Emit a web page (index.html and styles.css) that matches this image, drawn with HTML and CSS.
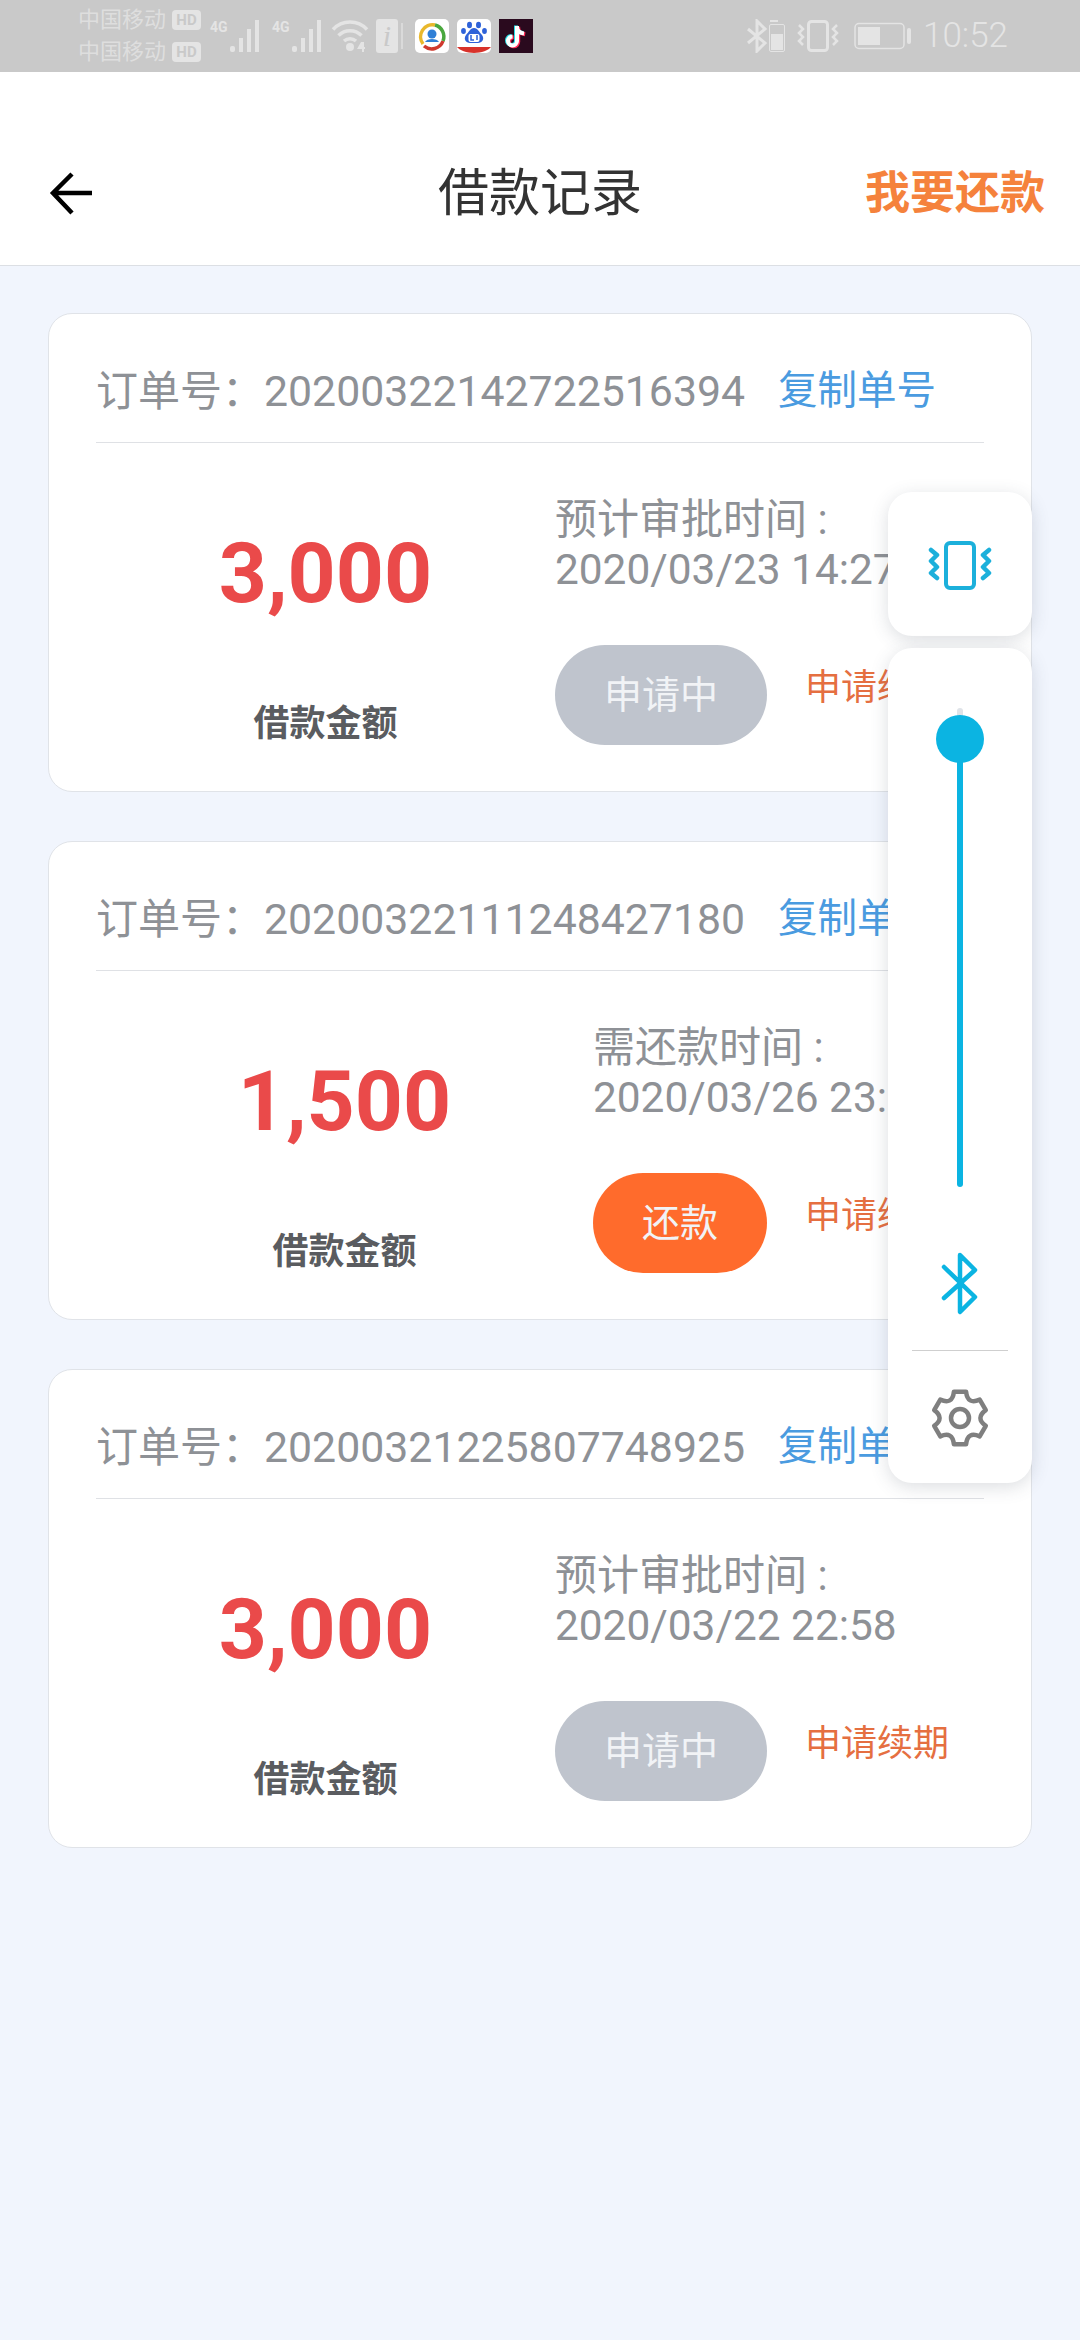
FILE: index.html
```html
<!DOCTYPE html>
<html lang="zh-CN">
<head>
    <title>借款记录</title>
    <link rel="stylesheet" href="styles.css">
</head>
<body>
    <div class="page">
        <div class="status-bar">
            <div class="carriers">
                <div class="carrier"><span>中国移动</span><span class="hd">HD</span></div>
                <div class="carrier"><span>中国移动</span><span class="hd">HD</span></div>
            </div>
            <div class="signal">
                <span class="net">4G</span>
                <svg class="bars" width="34" height="34" viewBox="0 0 34 34"><g fill="#e4e4e4"><rect x="0" y="27" width="5" height="6" rx="2"/><rect x="9" y="19" width="4" height="14"/><rect x="17" y="10" width="4" height="23"/><rect x="25" y="1" width="4" height="32"/></g></svg>
            </div>
            <div class="signal">
                <span class="net">4G</span>
                <svg class="bars" width="34" height="34" viewBox="0 0 34 34"><g fill="#e4e4e4"><rect x="0" y="27" width="5" height="6" rx="2"/><rect x="9" y="19" width="4" height="14"/><rect x="17" y="10" width="4" height="23"/><rect x="25" y="1" width="4" height="32"/></g></svg>
            </div>
            <svg class="wifi" width="40" height="32" viewBox="0 0 40 32"><g fill="none" stroke="#e4e4e4" stroke-width="3.5"><path d="M2 9.5C11-.5 27-.5 36 9.5"/><path d="M7.500 15.500C14 9 24 9 30.500 15.500"/><path d="M13 21C16.500 18 21.500 18 25 21"/></g><circle cx="19" cy="27" r="4" fill="#e4e4e4"/><path d="M30 22l-4 7h5v3h2v-3h1v-2h-1v-5z" fill="#e4e4e4"/></svg>
            <div class="info-icon">
                <span class="info-box">i</span>
                <span class="info-edge"></span>
            </div>
            <div class="app-icons">
                <svg class="app" width="34" height="34" viewBox="0 0 34 34">
                    <rect width="34" height="34" rx="5" fill="#fff"/>
                    <g fill="none" stroke-width="3.500">
                        <path d="M8 25A12 12 0 0 1 20 6" stroke="#e9b82c"/>
                        <path d="M20 6A12 12 0 0 1 28 22" stroke="#4aa83e"/>
                        <path d="M28 22A12 12 0 0 1 9 27" stroke="#cf3a2e"/>
                    </g>
                    <circle cx="17" cy="15" r="4.500" fill="#2f7fd6"/>
                    <path d="M10 23c2-4 12-4 14 0z" fill="#2f7fd6"/>
                </svg>
                <svg class="app" width="34" height="34" viewBox="0 0 34 34">
                    <rect width="34" height="34" rx="5" fill="#fff"/>
                    <g fill="#2e62d9">
                        <ellipse cx="12.500" cy="6" rx="2.500" ry="3.200"/>
                        <ellipse cx="21.500" cy="6" rx="2.500" ry="3.200"/>
                        <ellipse cx="6.500" cy="12" rx="2.400" ry="3"/>
                        <ellipse cx="27.500" cy="12" rx="2.400" ry="3"/>
                        <path d="M17 9c4 0 5 4 8 7 3 4 0 8-4 8H13c-4 0-7-4-4-8 3-3 4-7 8-7z"/>
                    </g>
                    <rect x="11.500" y="15" width="11" height="8" rx="2" fill="#fff"/>
                    <path d="M14 16v5h3M20 16v5" fill="none" stroke="#2e62d9" stroke-width="1.500"/>
                    <path d="M0 28h34c-2 3-10 6-17 6S2 31 0 28z" fill="#d8322a"/>
                </svg>
                <svg class="app" width="34" height="34" viewBox="0 0 34 34">
                    <rect width="34" height="34" fill="#2a0a1e"/>
                    <g fill="none" stroke-width="4">
                        <path d="M18 7v15a4.500 4.500 0 1 1-4.500-4.500M18 8c0 4 3 6 7 6.500" stroke="#ff2a55" transform="translate(1.200 .8)"/>
                        <path d="M18 7v15a4.500 4.500 0 1 1-4.500-4.500M18 8c0 4 3 6 7 6.500" stroke="#25e0e8" transform="translate(-1 -.6)"/>
                        <path d="M18 7v15a4.500 4.500 0 1 1-4.500-4.500M18 8c0 4 3 6 7 6.500" stroke="#fff"/>
                    </g>
                </svg>
            </div>
            <div class="status-right">
                <svg width="40" height="34" viewBox="0 0 40 34">
                    <path d="M2 10l17 14-8 8V2l8 8-17 14" fill="none" stroke="#e4e4e4" stroke-width="3"/>
                    <rect x="24" y="1" width="8" height="2" fill="#e4e4e4"/>
                    <rect x="23.500" y="5.500" width="15" height="27" rx="1.500" fill="none" stroke="#e4e4e4"/>
                    <rect x="25" y="15" width="12" height="16" fill="#e4e4e4"/>
                </svg>
                <svg class="vib-small" width="42" height="34" viewBox="0 0 42 34">
                    <rect x="11.500" y="2.500" width="19" height="29" rx="3" fill="none" stroke="#e4e4e4" stroke-width="3"/>
                    <path d="M2 6l4 4-4 4 4 4-4 4 4 4M40 6l-4 4 4 4-4 4 4 4-4 4" fill="none" stroke="#e4e4e4" stroke-width="2.500"/>
                </svg>
                <svg class="battery" width="58" height="28" viewBox="0 0 58 28">
                    <rect x="1" y="1.500" width="49" height="25" rx="4" fill="none" stroke="#e4e4e4" stroke-width="1.500"/>
                    <rect x="4" y="5" width="22" height="18" fill="#e4e4e4"/>
                    <rect x="53" y="6" width="4" height="16" rx="2" fill="#e4e4e4"/>
                </svg>
                <span class="time">10:52</span>
            </div>
        </div>

        <header class="top-bar">
            <div class="back">
                <svg width="48" height="46" viewBox="0 0 48 46"><path d="M44 22H6M24 3L5 22l19 20" fill="none" stroke="#000" stroke-width="4.500"/></svg>
            </div>
            <h1 class="title">借款记录</h1>
            <div class="repay-link">我要还款</div>
        </header>

        <div class="record-list">
            <div class="record-card">
                <div class="order-row">
                    <span class="order-no">订单号：<span class="num">20200322142722516394</span></span>
                    <span class="copy-link">复制单号</span>
                </div>
                <div class="record-body">
                    <div class="amount-col">
                        <div class="amount">3,000</div>
                        <div class="amount-label">借款金额</div>
                    </div>
                    <div class="detail-col">
                        <div class="detail-text">预计审批时间 :</div>
                        <div class="detail-text date">2020/03/23 14:27</div>
                        <div class="action-row">
                            <div class="pill pill-pending">申请中</div>
                            <div class="renew-link">申请续期</div>
                        </div>
                    </div>
                </div>
            </div>

            <div class="record-card">
                <div class="order-row">
                    <span class="order-no">订单号：<span class="num">20200322111248427180</span></span>
                    <span class="copy-link">复制单号</span>
                </div>
                <div class="record-body">
                    <div class="amount-col">
                        <div class="amount">1,500</div>
                        <div class="amount-label">借款金额</div>
                    </div>
                    <div class="detail-col">
                        <div class="detail-text">需还款时间 :</div>
                        <div class="detail-text date">2020/03/26 23:59</div>
                        <div class="action-row">
                            <div class="pill pill-repay">还款</div>
                            <div class="renew-link">申请续期</div>
                        </div>
                    </div>
                </div>
            </div>

            <div class="record-card">
                <div class="order-row">
                    <span class="order-no">订单号：<span class="num">20200321225807748925</span></span>
                    <span class="copy-link">复制单号</span>
                </div>
                <div class="record-body">
                    <div class="amount-col">
                        <div class="amount">3,000</div>
                        <div class="amount-label">借款金额</div>
                    </div>
                    <div class="detail-col">
                        <div class="detail-text">预计审批时间 :</div>
                        <div class="detail-text date">2020/03/22 22:58</div>
                        <div class="action-row">
                            <div class="pill pill-pending">申请中</div>
                            <div class="renew-link">申请续期</div>
                        </div>
                    </div>
                </div>
            </div>
        </div>

        <div class="overlay">
            <div class="overlay-panel vibrate-panel">
                <svg width="64" height="52" viewBox="0 0 64 52">
                    <rect x="18" y="2" width="28" height="45" rx="4" fill="none" stroke="#1cb0db" stroke-width="4"/>
                    <path d="M3 9l6 5-6 6 6 6-6 6 6 5M61 9l-6 5 6 6-6 6 6 6-6 5" fill="none" stroke="#1cb0db" stroke-width="4.500" stroke-linecap="round" stroke-linejoin="round"/>
                </svg>
            </div>
            <div class="overlay-panel control-panel">
                <div class="slider">
                    <div class="slider-stub"></div>
                    <div class="slider-track"></div>
                    <div class="slider-knob"></div>
                </div>
                <svg class="bluetooth" width="40" height="66" viewBox="0 0 40 66">
                    <path d="M4 17l31 30-15 15V5l15 15L4 48" fill="none" stroke="#0bb4e2" stroke-width="4.500" stroke-linecap="round" stroke-linejoin="round"/>
                </svg>
                <div class="panel-line"></div>
                <svg class="gear" width="60" height="60" viewBox="0 0 60 60">
                    <path d="M23.900 3.700L36.100 3.700Q37.500 17 49.700 11.600L55.800 22.100Q45 30 55.800 37.900L49.700 48.400Q37.500 43 36.100 56.300L23.900 56.300Q22.500 43 10.300 48.400L4.200 37.900Q15 30 4.200 22.100L10.300 11.600Q22.500 17 23.900 3.700Z" fill="none" stroke="#7f7f7f" stroke-width="4.500" stroke-linejoin="round"/>
                    <circle cx="30" cy="30" r="9" fill="none" stroke="#7f7f7f" stroke-width="4.500"/>
                </svg>
            </div>
        </div>
    </div>
</body>
</html>
```

FILE: styles.css
```css
* {
    box-sizing: border-box;
}

body {
    margin: 0;
    font-family: Roboto, "Noto Sans CJK SC", sans-serif;
    background: #f1f5fd;
}

.page {
    position: relative;
    width: 1080px;
    height: 2340px;
    overflow: hidden;
}

/* status bar */
.status-bar {
    display: flex;
    align-items: center;
    height: 72px;
    padding-left: 78px;
    padding-right: 72px;
    background: #c9c9c9;
    color: #e4e4e4;
}

.carriers {
    display: flex;
    flex-direction: column;
    gap: 10px;
    width: 132px;
}

.carrier {
    display: flex;
    align-items: center;
    gap: 6px;
    height: 22px;
    color: #dedede;
    font-size: 22px;
    line-height: 22px;
}

.hd {
    width: 29px;
    height: 20px;
    border-radius: 4px;
    background: #e4e4e4;
    color: #c9c9c9;
    font-size: 15px;
    font-weight: 700;
    line-height: 20px;
    text-align: center;
}

.signal {
    position: relative;
    display: flex;
    width: 62px;
    height: 34px;
    justify-content: flex-end;
}

.bars {
    margin-right: 8px;
}

.net {
    position: absolute;
    left: 0;
    top: 0;
    font-size: 14px;
    font-weight: 700;
    line-height: 16px;
}

.wifi {
    margin-left: -3px;
}

.info-icon {
    display: flex;
    align-items: center;
    gap: 3px;
    margin-left: 5px;
}

.info-box {
    width: 22px;
    height: 34px;
    border-radius: 3px;
    background: #e4e4e4;
    color: #c9c9c9;
    font-family: "Liberation Serif", serif;
    font-size: 30px;
    font-style: italic;
    line-height: 34px;
    text-align: center;
}

.info-edge {
    width: 2px;
    height: 26px;
    background: #dadada;
}

.app-icons {
    display: flex;
    gap: 8px;
    margin-left: 12px;
}

.status-right {
    display: flex;
    align-items: center;
    margin-left: auto;
}

.vib-small {
    margin-left: 11px;
}

.battery {
    margin-left: 15px;
}

.time {
    margin-left: 11px;
    font-size: 35px;
    font-weight: 300;
    line-height: 40px;
}

/* header */
.top-bar {
    display: grid;
    grid-template-columns: 1fr auto 1fr;
    align-items: center;
    height: 194px;
    padding: 50px 33px 0;
    background: #fff;
    border-bottom: 1px solid #dcdfe4;
}

.back {
    display: flex;
    height: 46px;
    margin-left: 15px;
}

.title {
    margin: 0;
    color: #333;
    font-size: 51px;
    font-weight: 400;
    line-height: 60px;
}

.repay-link {
    margin-right: 2px;
    color: #f5823c;
    font-size: 45px;
    font-weight: 700;
    line-height: 60px;
    text-align: right;
}

/* records */
.record-list {
    display: flex;
    flex-direction: column;
    gap: 49px;
    padding: 47px 48px 0;
}

.record-card {
    padding: 0 47px;
    background: #fff;
    border: 1px solid #e0e3e8;
    border-radius: 24px;
}

.order-row {
    display: flex;
    align-items: center;
    justify-content: space-between;
    height: 129px;
    padding-top: 26px;
    border-bottom: 1px solid #dfe1e5;
}

.order-no {
    color: #8e9196;
    font-size: 42px;
    line-height: 58px;
}

.num {
    font-size: 42.8px;
}

.copy-link {
    margin-right: 48px;
    color: #4a9be0;
    font-size: 39.5px;
    line-height: 58px;
}

.record-body {
    display: flex;
    padding-bottom: 42px;
}

.amount-col {
    flex: 1;
    padding-top: 81px;
    text-align: center;
}

.amount {
    color: #ea4a4a;
    font-size: 84px;
    font-weight: 700;
    line-height: 100px;
}

.amount-label {
    margin-top: 75px;
    color: #5a5c60;
    font-size: 36px;
    font-weight: 700;
    line-height: 50px;
}

.detail-col {
    padding-top: 52px;
    padding-right: 35px;
}

.detail-text {
    width: 0;
    color: #8e9196;
    font-size: 42px;
    line-height: 50px;
    white-space: nowrap;
}

.detail-text.date {
    font-size: 42.4px;
}

.action-row {
    display: flex;
    align-items: flex-start;
    gap: 38px;
    margin-top: 50px;
}

.pill {
    height: 100px;
    padding: 0 49px;
    border-radius: 50px;
    color: #f1f3f6;
    font-size: 38px;
    line-height: 100px;
    white-space: nowrap;
}

.pill-pending {
    background: #bfc4cd;
}

.pill-repay {
    background: #ff6b2c;
}

.renew-link {
    margin-top: 18px;
    color: #e56f41;
    font-size: 36px;
    line-height: 50px;
    white-space: nowrap;
}

/* floating sound panel */
.overlay {
    position: absolute;
    top: 492px;
    right: 48px;
    display: flex;
    flex-direction: column;
    gap: 12px;
    width: 144px;
}

.overlay-panel {
    background: #fff;
    border-radius: 24px;
    box-shadow: 0 4px 18px rgba(60, 70, 90, 0.18);
}

.vibrate-panel {
    display: flex;
    align-items: center;
    justify-content: center;
    height: 144px;
    padding-top: 5px;
}

.control-panel {
    display: flex;
    flex-direction: column;
    align-items: center;
    height: 835px;
    padding-top: 60px;
}

.slider {
    position: relative;
    width: 6px;
    height: 479px;
}

.slider-stub {
    height: 12px;
    border-radius: 3px 3px 0 0;
    background: #dfe3e8;
}

.slider-track {
    height: 467px;
    border-radius: 0 0 3px 3px;
    background: #0bb4e2;
}

.slider-knob {
    position: absolute;
    top: 7px;
    left: -21px;
    width: 48px;
    height: 48px;
    border-radius: 50%;
    background: #0bb4e2;
}

.bluetooth {
    margin-top: 63px;
}

.panel-line {
    width: 96px;
    height: 1px;
    margin-top: 34px;
    background: #cfcfcf;
}

.gear {
    margin-top: 37px;
}
```
